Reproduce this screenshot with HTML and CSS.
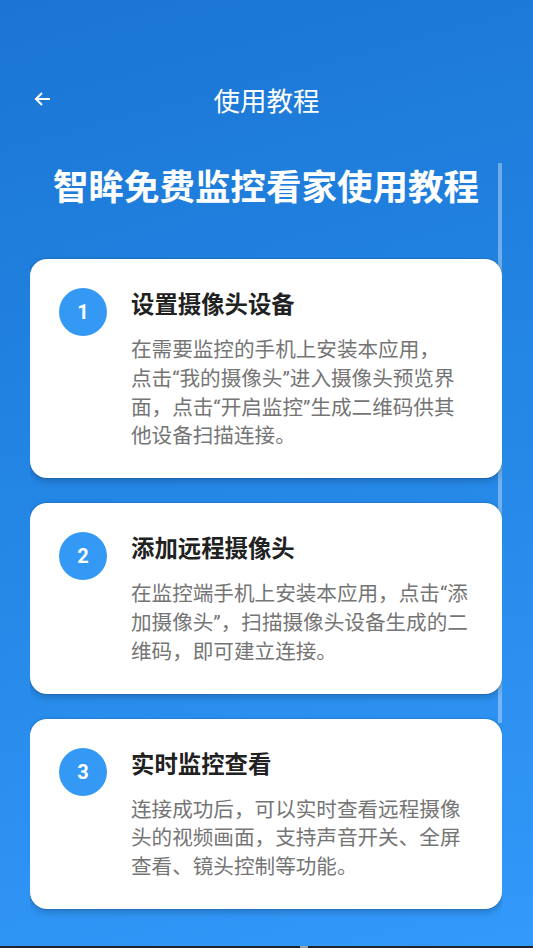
FILE: index.html
```html
<!DOCTYPE html>
<html>
<head>
    <meta charset="utf-8">
    <title>使用教程</title>
    <link rel="stylesheet" href="styles.css">
</head>
<body>
    <div class="screen">
        <!-- Toolbar -->
        <div class="toolbar">
            <button class="back-btn" aria-label="返回">
                <svg width="16" height="16" viewBox="0 0 16 16" fill="none" stroke="#fff" stroke-width="2" stroke-linecap="square">
                    <path d="M15 8H2.5"/>
                    <path d="M8 2L2 8l6 6" stroke-linecap="butt"/>
                </svg>
            </button>
            <h1 class="toolbar-title">使用教程</h1>
        </div>

        <!-- Tutorial list -->
        <div class="content">
            <div class="scroll-thumb"></div>
            <h2 class="heading">智眸免费监控看家使用教程</h2>

            <div class="step-card">
                <div class="step-num">1</div>
                <div class="step-body">
                    <h3 class="step-title">设置摄像头设备</h3>
                    <p class="step-desc">在需要监控的手机上安装本应用，<br>点击“我的摄像头”进入摄像头预览界<br>面，点击“开启监控”生成二维码供其<br>他设备扫描连接。</p>
                </div>
            </div>

            <div class="step-card">
                <div class="step-num">2</div>
                <div class="step-body">
                    <h3 class="step-title">添加远程摄像头</h3>
                    <p class="step-desc">在监控端手机上安装本应用，点击“添<br>加摄像头”，扫描摄像头设备生成的二<br>维码，即可建立连接。</p>
                </div>
            </div>

            <div class="step-card">
                <div class="step-num">3</div>
                <div class="step-body">
                    <h3 class="step-title">实时监控查看</h3>
                    <p class="step-desc">连接成功后，可以实时查看远程摄像<br>头的视频画面，支持声音开关、全屏<br>查看、镜头控制等功能。</p>
                </div>
            </div>
        </div>

        <!-- Navigation bar edge -->
        <div class="nav-edge"><span class="nav-handle"></span></div>
    </div>
</body>
</html>
```

FILE: styles.css
```css
body {
    margin: 0;
    padding: 0;
    width: 533px;
    height: 948px;
    overflow: hidden;
    font-family: Roboto, "Noto Sans CJK SC", sans-serif;
}

.screen {
    height: 948px;
    display: flex;
    flex-direction: column;
    background: linear-gradient(165deg, #1b75d3 0%, #2487e6 50%, #3399fa 100%);
}

/* Toolbar */
.toolbar {
    margin-top: 60px;
    height: 78px;
    display: flex;
    align-items: center;
    position: relative;
}
.back-btn {
    background: none;
    border: none;
    padding: 0;
    margin-left: 34px;
    width: 16px;
    height: 16px;
    display: flex;
    cursor: pointer;
}
.toolbar-title {
    position: absolute;
    left: 0;
    right: 0;
    margin: 0;
    text-align: center;
    font-size: 26.5px;
    font-weight: 400;
    color: #fff;
    pointer-events: none;
}

/* Scrolling content */
.content {
    flex: 1;
    margin: 0 31px 0 30px;
    padding-top: 24px;
    position: relative;
    overflow: hidden;
}
.scroll-thumb {
    position: absolute;
    top: 25px;
    right: 0;
    width: 4px;
    height: 560px;
    background: rgba(255, 255, 255, 0.35);
}
.heading {
    margin: 0 0 45px;
    text-align: center;
    font-size: 35.5px;
    line-height: 52px;
    font-weight: 700;
    color: #fff;
    position: relative;
}

/* Step cards */
.step-card {
    position: relative;
    display: flex;
    gap: 24px;
    padding: 29px 29px 27px;
    margin-bottom: 25px;
    background: #fff;
    border-radius: 17px;
    box-shadow: 0 0 0 1px rgba(0, 0, 0, 0.07), 0 3px 7px rgba(0, 0, 0, 0.22);
}
.step-num {
    flex: none;
    width: 48px;
    height: 48px;
    border-radius: 50%;
    background: #3399f5;
    color: #fff;
    font-size: 20px;
    font-weight: 700;
    display: flex;
    align-items: center;
    justify-content: center;
}
.step-body {
    flex: 1;
    margin-top: 1px;
}
.step-title {
    margin: 0;
    font-size: 23.4px;
    line-height: 32px;
    font-weight: 700;
    color: #212121;
}
.step-desc {
    margin: 15px 0 0;
    font-size: 20.6px;
    line-height: 28.8px;
    color: #757575;
    white-space: nowrap;
}

/* Bottom navigation edge */
.nav-edge {
    height: 2px;
    background: #1c2630;
    position: relative;
}
.nav-handle {
    position: absolute;
    left: 300px;
    top: 0;
    width: 8px;
    height: 2px;
    background: #9aa3ad;
}
```
